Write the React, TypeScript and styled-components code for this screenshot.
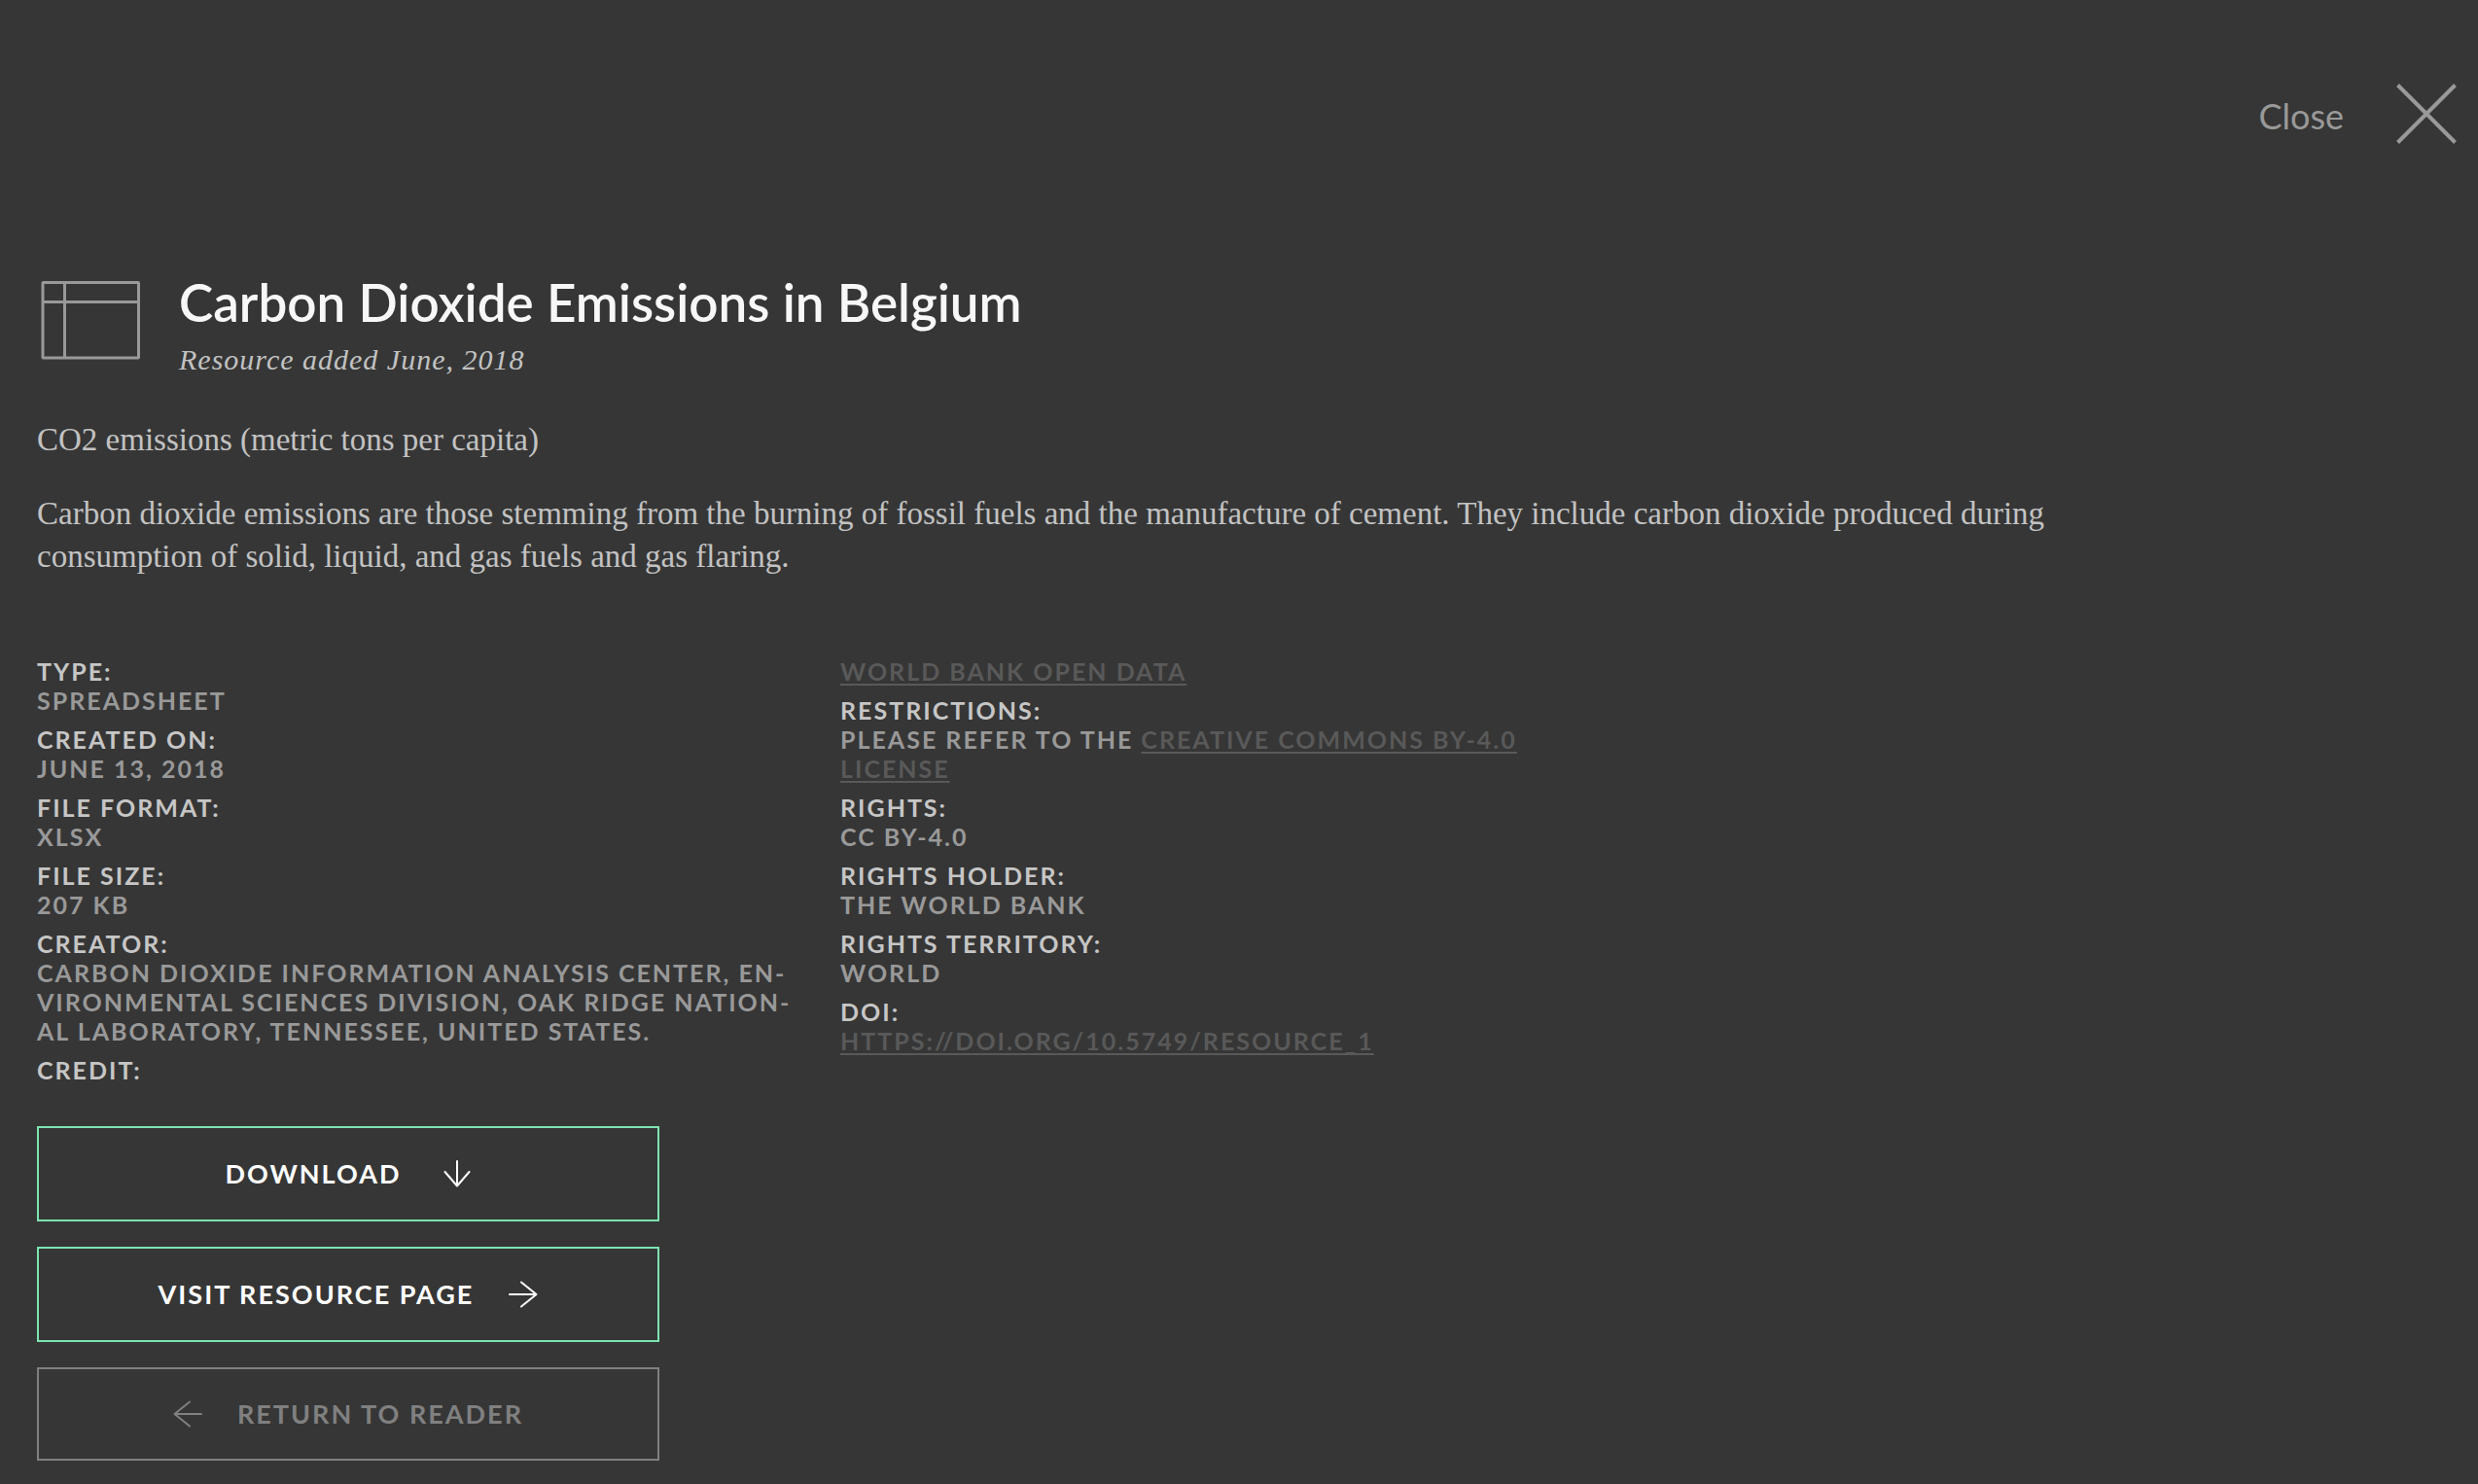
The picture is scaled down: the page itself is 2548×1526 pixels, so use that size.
import React from "react";
import styled, { createGlobalStyle } from "styled-components";

const sans = `Lato, "Liberation Sans", sans-serif`;
const serif = `"Liberation Serif", serif`;

const GlobalStyle = createGlobalStyle`
  *, *::before, *::after { box-sizing: border-box; }
  body {
    margin: 0;
    background: #363636;
    color: #c2c2c2;
    font-family: ${serif};
  }
`;

const Overlay = styled.main`
  min-height: 100vh;
  padding: 86px 22px 22px 38px;
`;

const TopBar = styled.header`
  display: flex;
  justify-content: flex-end;
`;

const CloseButton = styled.button`
  display: flex;
  align-items: center;
  gap: 54px;
  padding: 0;
  border: 0;
  background: none;
  color: #999;
  font: 400 36px/58px ${sans};
  cursor: pointer;
`;

const CloseLabel = styled.span`
  padding-top: 4px;
`;

const Heading = styled.section`
  display: flex;
  align-items: flex-start;
  gap: 40px;
  margin-top: 136px;
  padding-left: 4px;
`;

const SheetIcon = styled.svg`
  flex: none;
  margin-top: 4px;
`;

const Title = styled.h1`
  margin: 0;
  color: #f7f7f7;
  font: 600 53px/54px ${sans};
`;

const Added = styled.p`
  margin: 10px 0 0;
  font: italic 400 30px/44px ${serif};
  letter-spacing: 1px;
`;

const Description = styled.section`
  max-width: 2100px;
  margin-top: 38px;
`;

const Paragraph = styled.p`
  margin: 0 0 32px;
  font-size: 33px;
  line-height: 44px;
`;

const Details = styled.div`
  display: grid;
  grid-template-columns: repeat(2, minmax(0, 1fr));
  gap: 48px;
  max-width: 1604px;
  margin-top: 81px;
`;

const Facts = styled.dl`
  margin: 0;
  font: 700 25px/30px ${sans};
  letter-spacing: 2px;
  text-transform: uppercase;
`;

const Term = styled.dt`
  color: #c6c6c6;
`;

const Value = styled.dd`
  margin: 0 0 10px;
  color: #999;
`;

const Link = styled.a`
  color: #595959;
  text-decoration: underline;
  text-decoration-thickness: 2px;
  text-underline-offset: 3px;
  text-decoration-skip-ink: none;
`;

const Actions = styled.nav`
  display: flex;
  flex-direction: column;
  gap: 26px;
  max-width: 640px;
  margin-top: 43px;
`;

const Action = styled.button<{ $muted?: boolean; $gap?: number }>`
  display: flex;
  align-items: center;
  justify-content: center;
  gap: ${(p) => p.$gap ?? 36}px;
  height: ${(p) => (p.$muted ? 96 : 98)}px;
  padding: 0;
  border: 2px solid ${(p) => (p.$muted ? "#808080" : "#7ce3b1")};
  background: none;
  color: ${(p) => (p.$muted ? "#808080" : "#fff")};
  font: 700 27px/40px ${sans};
  letter-spacing: 2px;
  text-transform: uppercase;
  cursor: pointer;
`;

type Fact = { term?: string; value?: React.ReactNode };

const source: Fact[] = [
  { term: "Type", value: "Spreadsheet" },
  { term: "Created on", value: "June 13, 2018" },
  { term: "File format", value: "XLSX" },
  { term: "File size", value: "207 KB" },
  {
    term: "Creator",
    value:
      "Carbon Dioxide Information Analysis Center, En\u00advironmental Sciences Division, Oak Ridge Nation\u00adal Laboratory, Tennessee, United States.",
  },
  { term: "Credit" },
];

const rights: Fact[] = [
  { value: <Link href="#world-bank">World Bank Open Data</Link> },
  {
    term: "Restrictions",
    value: (
      <>
        Please refer to the <Link href="#license">Creative Commons BY-4.0 License</Link>
      </>
    ),
  },
  { term: "Rights", value: "CC BY-4.0" },
  { term: "Rights holder", value: "The World Bank" },
  { term: "Rights territory", value: "World" },
  { term: "DOI", value: <Link href="#doi">https://doi.org/10.5749/resource_1</Link> },
];

function FactList({ facts }: { facts: Fact[] }) {
  return (
    <Facts>
      {facts.map((f, i) => (
        <React.Fragment key={i}>
          {f.term && <Term>{f.term}:</Term>}
          {f.value && <Value>{f.value}</Value>}
        </React.Fragment>
      ))}
    </Facts>
  );
}

const ArrowIcon = styled.svg.attrs({ "aria-hidden": true })`
  flex: none;
  fill: none;
  stroke: currentColor;
  stroke-width: 2;
  stroke-linecap: round;
  stroke-linejoin: round;
`;

function ArrowDown() {
  return (
    <ArrowIcon width="28" height="28" viewBox="0 0 28 28">
      <path d="M14 1V26.5M1.5 12L14 26.5L26.5 12" />
    </ArrowIcon>
  );
}

function ArrowRight() {
  return (
    <ArrowIcon width="30" height="28" viewBox="0 0 30 28">
      <path d="M1 14H28.5M13 1.5L28.5 14L13 26.5" />
    </ArrowIcon>
  );
}

function ArrowLeft() {
  return (
    <ArrowIcon width="30" height="28" viewBox="0 0 30 28">
      <path d="M29 14H1.5M17 1.5L1.5 14L17 26.5" />
    </ArrowIcon>
  );
}

export default function App() {
  return (
    <>
      <GlobalStyle />
      <Overlay>
        <TopBar>
          <CloseButton type="button">
            <CloseLabel>Close</CloseLabel>
            <svg width="62" height="62" viewBox="0 0 62 62" fill="none" stroke="currentColor" strokeWidth="4" aria-hidden="true">
              <path d="M1.5 1.5L60.5 60.5M60.5 1.5L1.5 60.5" />
            </svg>
          </CloseButton>
        </TopBar>

        <Heading>
          <SheetIcon width="102" height="82" viewBox="0 0 102 82" fill="none" stroke="#999" strokeWidth="3" aria-hidden="true">
            <rect x="2" y="2.5" width="98.5" height="77.5" rx="0.5" />
            <path d="M24.5 2.5V80M2 22.5H100.5" />
          </SheetIcon>
          <div>
            <Title>Carbon Dioxide Emissions in Belgium</Title>
            <Added>Resource added June, 2018</Added>
          </div>
        </Heading>

        <Description>
          <Paragraph>CO2 emissions (metric tons per capita)</Paragraph>
          <Paragraph>
            Carbon dioxide emissions are those stemming from the burning of fossil fuels and the manufacture of cement.
            They include carbon dioxide produced during consumption of solid, liquid, and gas fuels and gas flaring.
          </Paragraph>
        </Description>

        <Details>
          <FactList facts={source} />
          <FactList facts={rights} />
        </Details>

        <Actions aria-label="Resource actions">
          <Action type="button" $gap={44}>
            Download
            <ArrowDown />
          </Action>
          <Action type="button">
            Visit resource page
            <ArrowRight />
          </Action>
          <Action type="button" $muted>
            <ArrowLeft />
            Return to reader
          </Action>
        </Actions>
      </Overlay>
    </>
  );
}
